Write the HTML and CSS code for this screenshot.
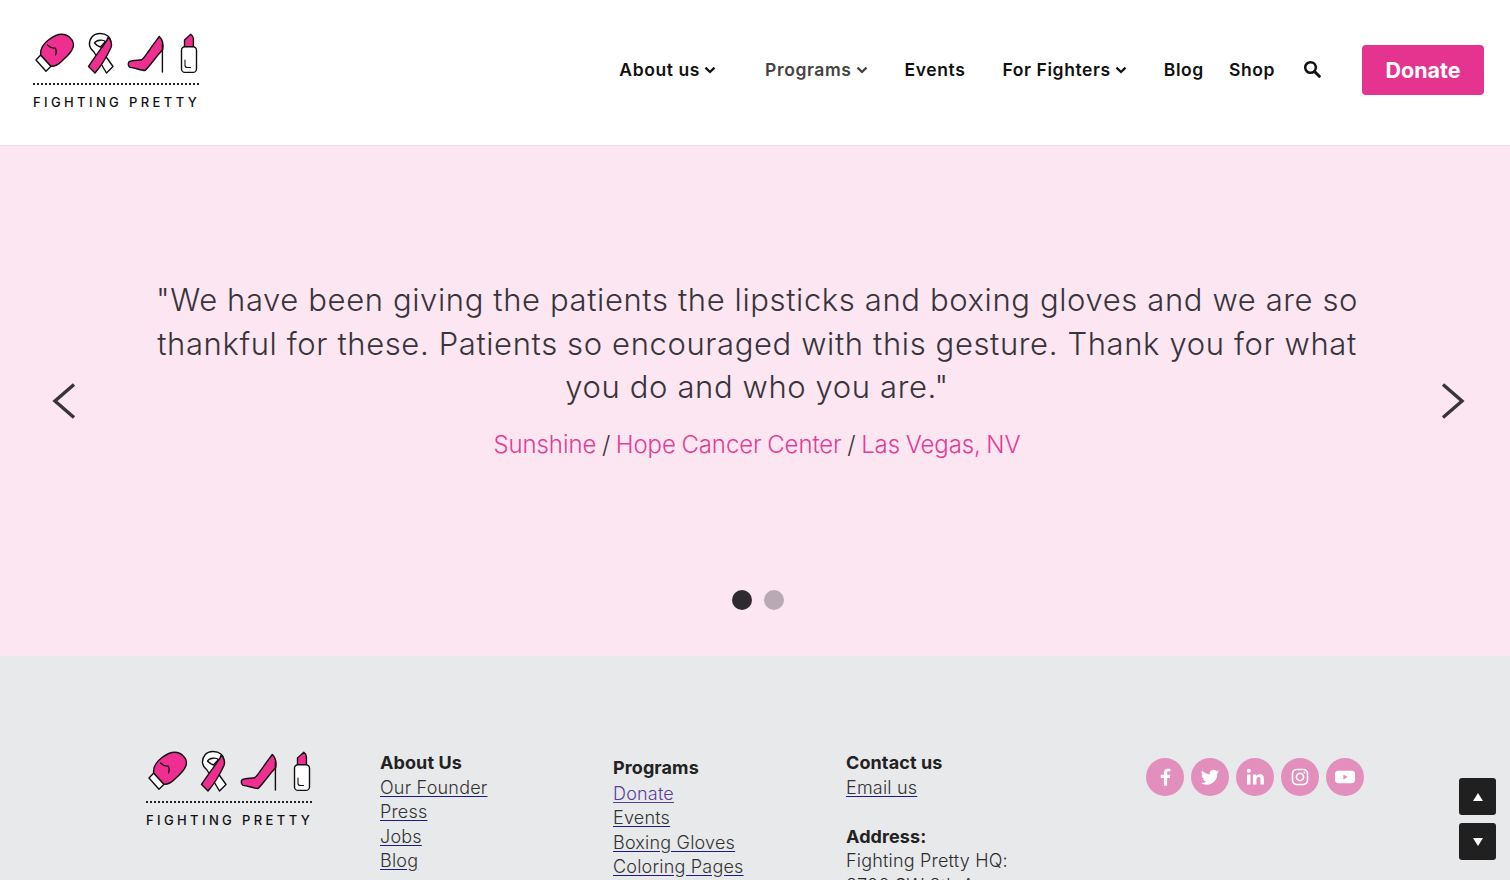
FILE: index.html
```html
<!DOCTYPE html>
<html lang="en">
<head>
<meta charset="utf-8">
<title>Fighting Pretty</title>
<link rel="stylesheet" href="styles.css">
</head>
<body>
<svg class="sprite" width="0" height="0" aria-hidden="true">
  <symbol id="logo-art" viewBox="33 32 166 42">
    <g stroke="#111" stroke-width="1.4" stroke-linejoin="round" stroke-linecap="round">
      <path fill="#fff" d="M36 60 40.700 55 51 66.300 46 71.300Z"/>
      <path fill="#ee2f8f" d="M40.700 55C40 49 43 44 49 39.500 55 35 61 33 66 35 71.500 37 74.500 42.500 73 47.500 71.500 52.500 67 56.500 62 61 58 65 54.500 66.500 51 66.300Z"/>
      <path fill="none" stroke-width="1.200" d="M47.500 45C50 47.500 53 48.500 55.300 48 56.500 50 56.500 52.500 55.500 55"/>
      <path fill="#fff" d="M89.500 45C89 39 93 33.500 100 33.500 107 33.500 110.500 37.500 110.800 41L105.500 56 113 66.500 106.500 73 94 52C91.500 50 90 48 89.500 45ZM94.500 43C96.500 39.500 103.500 39.500 105.500 41.500L100.500 47C98 46 96 45 94.500 43Z"/>
      <path fill="#ee2f8f" d="M108 37.500C111 39.500 112.300 44 111 47.500 108 54 101 66 95 73L88.500 66.500C94 58 101 49 105 43 106.300 41.500 107.500 39.500 108 37.500Z"/>
      <path fill="#ee2f8f" d="M159.300 36.500C156 41 152 46 149.500 50 146 54.500 144 58.500 141.500 59.800 138 60.500 131 59.800 128.800 62 128 64 128.500 66.300 130 67.400 135 67.800 141 70.500 145 70.500 150 66 158 54 162.700 49.700 163.500 45 163 40 159.300 36.500Z"/>
      <path fill="none" d="M162.400 44V72"/>
      <path fill="#ee2f8f" d="M184.500 46.800V40L190.800 34.300C192.500 35.500 193.400 37 193.400 39V46.800Z"/>
      <rect x="181.500" y="46.800" width="15" height="25.600" rx="3.500" fill="#fff"/>
      <path fill="none" stroke-width="1.100" d="M185 60V65.500C185 67 186 67.500 187.500 67.500H190.500"/>
    </g>
  </symbol>
  <symbol id="chev" viewBox="0 0 12 8"><path d="M1.500 1.700 6 6 10.500 1.700" fill="none" stroke="currentColor" stroke-width="2.300"/></symbol>
</svg>

<header class="site-header">
  <a class="brand" href="#">
    <svg class="brand-art"><use href="#logo-art"/></svg>
    <span class="brand-rule"></span>
    <span class="brand-name">FIGHTING PRETTY</span>
  </a>
  <nav class="nav">
    <a class="nav-item gap-a" href="#">About us <svg class="chev"><use href="#chev"/></svg></a>
    <a class="nav-item nav-muted gap-b" href="#">Programs <svg class="chev"><use href="#chev"/></svg></a>
    <a class="nav-item gap-b" href="#">Events</a>
    <a class="nav-item gap-c" href="#">For Fighters <svg class="chev"><use href="#chev"/></svg></a>
    <a class="nav-item gap-d" href="#">Blog</a>
    <a class="nav-item gap-e" href="#">Shop</a>
    <a class="nav-item gap-f" href="#" aria-label="Search">
      <svg class="search" viewBox="0 0 18 18"><circle cx="7.500" cy="7.500" r="5.300" fill="none" stroke="#111" stroke-width="2.500"/><path d="M11.500 11.500 16.300 16.300" stroke="#111" stroke-width="3" stroke-linecap="round"/></svg>
    </a>
    <a class="donate" href="#">Donate</a>
  </nav>
</header>

<section class="hero">
  <button class="arrow" aria-label="Previous"><svg viewBox="0 0 24 36"><path d="M22 1.500 3 18 22 34.500" fill="none" stroke="#38343a" stroke-width="3.400"/></svg></button>
  <div class="slide">
    <blockquote class="quote">"We have been giving the patients the lipsticks and boxing gloves and we are so<br>thankful for these. Patients so encouraged with this gesture. Thank you for what<br>you do and who you are."</blockquote>
    <p class="cite"><span>Sunshine</span> / <span>Hope Cancer Center</span> / <span>Las Vegas, NV</span></p>
    <div class="dots"><span class="dot dot-on"></span><span class="dot"></span></div>
  </div>
  <button class="arrow" aria-label="Next"><svg viewBox="0 0 24 36"><path d="M2 1.500 21 18 2 34.500" fill="none" stroke="#38343a" stroke-width="3.400"/></svg></button>
</section>

<footer class="footer">
  <a class="brand" href="#">
    <svg class="brand-art"><use href="#logo-art"/></svg>
    <span class="brand-rule"></span>
    <span class="brand-name">FIGHTING PRETTY</span>
  </a>
  <div class="col">
    <h4>About Us</h4>
    <a href="#">Our Founder</a><a href="#">Press</a><a href="#">Jobs</a><a href="#">Blog</a>
  </div>
  <div class="col col-low">
    <h4>Programs</h4>
    <a class="visited" href="#">Donate</a><a href="#">Events</a><a href="#">Boxing Gloves</a><a href="#">Coloring Pages</a>
  </div>
  <div class="col">
    <h4>Contact us</h4>
    <a href="#">Email us</a>
    <h4 class="spaced">Address:</h4>
    <p>Fighting Pretty HQ:</p>
    <p>3700 SW 8th Ave</p>
  </div>
  <div class="social">
    <a class="soc" href="#" aria-label="Facebook"><svg viewBox="0 0 24 24"><path fill="#fff" d="M14.500 22.500v-9.300h3.300l.5-3.800h-3.800V7.300c0-1.100.4-1.800 1.900-1.800h2V2.200c-.4-.1-1.500-.2-2.900-.2-2.900 0-4.800 1.700-4.800 4.900v2.500H6.900v3.800h3.800v9.300z"/></svg></a>
    <a class="soc" href="#" aria-label="Twitter"><svg viewBox="0 0 24 24"><path fill="#fff" d="M23 5.500c-.8.400-1.700.600-2.600.700.900-.600 1.600-1.400 2-2.500-.900.500-1.800.900-2.900 1.100a4.500 4.500 0 0 0-7.700 4.100C8.100 8.700 4.800 6.900 2.500 4.200c-1.200 2-.6 4.600 1.400 6-.7 0-1.400-.2-2-.6 0 2.200 1.500 4 3.600 4.500-.7.200-1.400.2-2 .1.600 1.800 2.200 3.100 4.200 3.100A9 9 0 0 1 1 19.200a12.800 12.800 0 0 0 19.700-11.400c.9-.6 1.700-1.400 2.300-2.300z"/></svg></a>
    <a class="soc" href="#" aria-label="LinkedIn"><svg viewBox="0 0 24 24"><circle cx="4.500" cy="4.500" r="2.500" fill="#fff"/><path fill="#fff" d="M2.400 9h4.200v12H2.400zM9.500 9h4v1.800c.7-1.200 2.100-2.200 4.200-2.200 4.300 0 5 2.800 5 6.500V21h-4.200v-5.500c0-1.500 0-3.400-2.100-3.400s-2.600 1.600-2.600 3.300V21H9.500z"/></svg></a>
    <a class="soc" href="#" aria-label="Instagram"><svg viewBox="0 0 24 24"><rect x="3" y="3" width="18" height="18" rx="5" fill="none" stroke="#fff" stroke-width="2"/><circle cx="12" cy="12" r="4.300" fill="none" stroke="#fff" stroke-width="2"/><circle cx="17.300" cy="6.700" r="1.200" fill="#fff"/></svg></a>
    <a class="soc" href="#" aria-label="YouTube"><svg viewBox="0 0 24 24"><path fill="#fff" fill-rule="evenodd" d="M4 4.500h16c2.400 0 4 1.500 4 3.500v8c0 2-1.600 3.500-4 3.500H4c-2.400 0-4-1.500-4-3.500V8c0-2 1.600-3.500 4-3.500zM10 9v6l5.200-3z"/></svg></a>
  </div>
</footer>

<div class="scroller">
  <a class="scroll-btn" href="#" aria-label="Up"><svg viewBox="0 0 10 8"><path d="M5 0 10 8H0Z" fill="#fff"/></svg></a>
  <a class="scroll-btn" href="#" aria-label="Down"><svg viewBox="0 0 10 8"><path d="M0 0H10L5 8Z" fill="#fff"/></svg></a>
</div>
</body>
</html>
```
FILE: styles.css
```css
* { box-sizing: border-box; }
html, body { margin: 0; padding: 0; height: 880px; overflow: hidden; }
body { font-family: Inter, "Open Sans", sans-serif; color: #2d2d2f; background: #fff; }
a { color: inherit; }
.sprite { display: block; height: 0; }

.site-header { height: 146px; display: flex; align-items: flex-start; justify-content: space-between; padding: 32px 26px 0 33px; border-bottom: 1px solid #e9dfe5; }
.brand { display: flex; flex-direction: column; width: 166px; text-decoration: none; color: #111; }
.brand-art { width: 166px; height: 42px; display: block; }
.brand-rule { display: block; margin-top: 9px; border-top: 2px dotted #222; }
.brand-name { margin-top: 9px; font-size: 13px; line-height: 16px; font-weight: 500; letter-spacing: 3.380px; white-space: nowrap; }

.nav { display: flex; align-items: center; height: 50px; margin-top: 13px; }
.nav-item { display: flex; align-items: center; gap: 4px; font-size: 17.500px; font-weight: 600; letter-spacing: .6px; color: #111; text-decoration: none; white-space: nowrap; margin-top: -2px; }
.nav-muted { color: #444; }
.chev { width: 12px; height: 8px; margin-top: 2px; }
.gap-a { margin-right: 49px; }
.gap-b { margin-right: 37px; }
.gap-c { margin-right: 37px; }
.gap-d { margin-right: 25px; }
.gap-e { margin-right: 28px; }
.gap-f { margin-right: 41px; }
.search { width: 18px; height: 18px; display: block; }
.donate { display: flex; align-items: center; justify-content: center; width: 122px; height: 50px; background: #e5348f; color: #fff; border-radius: 4px; font-size: 21.500px; font-weight: 700; text-decoration: none; }

.hero { height: 510px; background: #fbe6f2; display: flex; align-items: flex-start; padding: 0 45px 0 52px; }
.arrow { flex: none; width: 24px; height: 36px; margin-top: 237px; padding: 0; border: 0; background: none; }
.arrow svg { display: block; width: 24px; height: 36px; }
.slide { flex: 1; display: flex; flex-direction: column; align-items: center; padding: 132px 3px 0 0; }
.quote { margin: 0; font-size: 31px; line-height: 43.500px; font-weight: 300; letter-spacing: .62px; text-align: center; color: #38343a; white-space: nowrap; }
.cite { margin: 21px 0 0; font-size: 24px; line-height: 30px; font-weight: 300; letter-spacing: -.1px; word-spacing: -1px; color: #38343a; }
.cite span { color: #e43d94; }
.dots { display: flex; gap: 12px; margin: 130px 0 0 2px; }
.dot { width: 20px; height: 20px; border-radius: 50%; background: #b9a9b4; }
.dot-on { background: #2f2a30; }

.footer { height: 224px; background: #e8e9eb; display: grid; grid-template-columns: 234px 233px 233px 300px auto; justify-content: start; padding: 94px 0 0 146px; overflow: hidden; }
.col { display: flex; flex-direction: column; margin-top: 1px; font-size: 18px; line-height: 24.500px; font-weight: 300; letter-spacing: .2px; }
.col h4 { margin: 0; font-size: 18px; line-height: 24.500px; font-weight: 700; letter-spacing: .1px; color: #222; }
.col .spaced { margin-top: 24.500px; }
.col p { margin: 0; }
.col a { align-self: flex-start; text-decoration: underline; text-decoration-color: #1a1a9c; text-underline-offset: 2px; color: #333; }
.col .visited { color: #5b3d9a; text-decoration-color: #5b3d9a; }
.col-low { padding-top: 5px; }
.col-low h4 { margin-bottom: 1px; }
.social { display: flex; gap: 7px; margin-top: 8px; align-self: start; }
.soc { width: 38px; height: 38px; border-radius: 50%; background: #e38fbd; display: flex; align-items: center; justify-content: center; }
.soc svg { width: 20px; height: 20px; display: block; }

.scroller { position: fixed; left: 1459px; top: 778px; display: flex; flex-direction: column; gap: 8px; }
.scroll-btn { width: 37px; height: 37px; background: #202020; border-radius: 3px; display: flex; align-items: center; justify-content: center; }
.scroll-btn svg { width: 10px; height: 8px; display: block; }
```
